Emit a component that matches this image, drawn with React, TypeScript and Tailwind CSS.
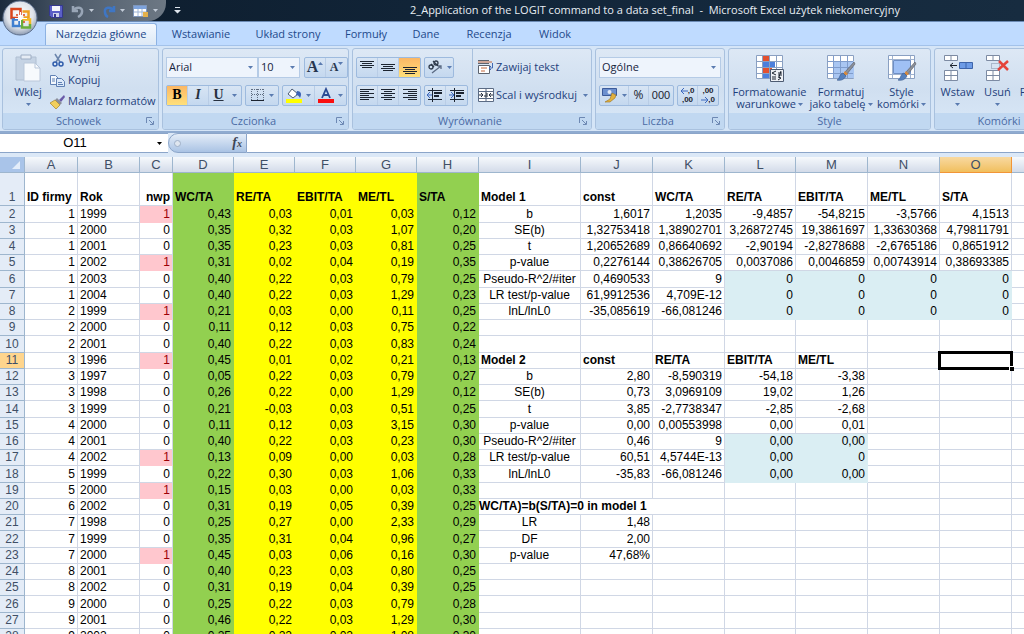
import React from 'react';
import clsx from 'clsx';

interface GroupProps {
  title: string;
  className: string;
  launcher?: boolean;
  children: React.ReactNode;
}

interface ButtonProps {
  label: string;
  className?: string;
  active?: boolean;
  children: React.ReactNode;
}

const tabs = [
  { name: 'Narzędzia główne', width: 'w-[112px]' },
  { name: 'Wstawianie', width: 'w-[88px]' },
  { name: 'Układ strony', width: 'w-[86px]' },
  { name: 'Formuły', width: 'w-[70px]' },
  { name: 'Dane', width: 'w-[50px]' },
  { name: 'Recenzja', width: 'w-[76px]' },
  { name: 'Widok', width: 'w-[56px]' },
];

const columns = [
  { name: 'A', width: 'w-[53px]' },
  { name: 'B', width: 'w-[62px]' },
  { name: 'C', width: 'w-[33px]' },
  { name: 'D', width: 'w-[61px]' },
  { name: 'E', width: 'w-[61px]' },
  { name: 'F', width: 'w-[61px]' },
  { name: 'G', width: 'w-[61px]' },
  { name: 'H', width: 'w-[62px]' },
  { name: 'I', width: 'w-[102px]' },
  { name: 'J', width: 'w-[72px]' },
  { name: 'K', width: 'w-[72px]' },
  { name: 'L', width: 'w-[71px]' },
  { name: 'M', width: 'w-[72px]' },
  { name: 'N', width: 'w-[72px]' },
  { name: 'O', width: 'w-[72px]' },
];

const headings = ['ID firmy', 'Rok', 'nwp', 'WC/TA', 'RE/TA', 'EBIT/TA', 'ME/TL', 'S/TA', 'Model 1', 'const', 'WC/TA', 'RE/TA', 'EBIT/TA', 'ME/TL', 'S/TA'];

// Sheet rows 2-28, columns A to O
const rows: string[][] = [
  ['1', '1999', '1', '0,43', '0,03', '0,01', '0,03', '0,12', 'b', '1,6017', '1,2035', '-9,4857', '-54,8215', '-3,5766', '4,1513'],
  ['1', '2000', '0', '0,35', '0,32', '0,03', '1,07', '0,20', 'SE(b)', '1,32753418', '1,38902701', '3,26872745', '19,3861697', '1,33630368', '4,79811791'],
  ['1', '2001', '0', '0,35', '0,23', '0,03', '0,81', '0,25', 't', '1,20652689', '0,86640692', '-2,90194', '-2,8278688', '-2,6765186', '0,8651912'],
  ['1', '2002', '1', '0,31', '0,02', '0,04', '0,19', '0,35', 'p-value', '0,2276144', '0,38626705', '0,0037086', '0,0046859', '0,00743914', '0,38693385'],
  ['1', '2003', '0', '0,40', '0,22', '0,03', '0,79', '0,25', 'Pseudo-R^2/#iter', '0,4690533', '9', '0', '0', '0', '0'],
  ['1', '2004', '0', '0,40', '0,22', '0,03', '1,29', '0,23', 'LR test/p-value', '61,9912536', '4,709E-12', '0', '0', '0', '0'],
  ['2', '1999', '1', '0,21', '0,03', '0,00', '0,11', '0,25', 'lnL/lnL0', '-35,085619', '-66,081246', '0', '0', '0', '0'],
  ['2', '2000', '0', '0,11', '0,12', '0,03', '0,75', '0,22'],
  ['2', '2001', '0', '0,40', '0,22', '0,03', '0,83', '0,24'],
  ['3', '1996', '1', '0,45', '0,01', '0,02', '0,21', '0,13', 'Model 2', 'const', 'RE/TA', 'EBIT/TA', 'ME/TL'],
  ['3', '1997', '0', '0,05', '0,22', '0,03', '0,79', '0,27', 'b', '2,80', '-8,590319', '-54,18', '-3,38'],
  ['3', '1998', '0', '0,26', '0,22', '0,00', '1,29', '0,12', 'SE(b)', '0,73', '3,0969109', '19,02', '1,26'],
  ['3', '1999', '0', '0,21', '-0,03', '0,03', '0,51', '0,25', 't', '3,85', '-2,7738347', '-2,85', '-2,68'],
  ['4', '2000', '0', '0,11', '0,12', '0,03', '3,15', '0,30', 'p-value', '0,00', '0,00553998', '0,00', '0,01'],
  ['4', '2001', '0', '0,40', '0,22', '0,03', '0,23', '0,30', 'Pseudo-R^2/#iter', '0,46', '9', '0,00', '0,00'],
  ['4', '2002', '1', '0,13', '0,09', '0,00', '0,03', '0,28', 'LR test/p-value', '60,51', '4,5744E-13', '0,00', '0'],
  ['5', '1999', '0', '0,22', '0,30', '0,03', '1,06', '0,33', 'lnL/lnL0', '-35,83', '-66,081246', '0,00', '0,00'],
  ['5', '2000', '1', '0,15', '0,03', '0,00', '0,03', '0,33'],
  ['6', '2002', '0', '0,31', '0,19', '0,05', '0,39', '0,25', 'WC/TA)=b(S/TA)=0 in model 1'],
  ['7', '1998', '0', '0,25', '0,27', '0,00', '2,33', '0,29', 'LR', '1,48'],
  ['7', '1999', '0', '0,35', '0,31', '0,04', '0,96', '0,27', 'DF', '2,00'],
  ['7', '2000', '1', '0,45', '0,03', '0,06', '0,16', '0,30', 'p-value', '47,68%'],
  ['8', '2001', '0', '0,40', '0,23', '0,03', '0,80', '0,25'],
  ['8', '2002', '0', '0,31', '0,19', '0,04', '0,39', '0,25'],
  ['9', '2000', '0', '0,25', '0,22', '0,03', '0,79', '0,28'],
  ['9', '2001', '0', '0,46', '0,22', '0,03', '1,29', '0,30'],
  ['9', '2002', '0', '0,25', '0,22', '0,02', '1,08', '0,30'],
];

const Arrow = ({ className = '' }: { className?: string }) => (
  <svg viewBox="0 0 5 3" className={clsx('h-[3px] w-[5px] shrink-0 fill-[#5a7bb0]', className)}>
    <path d="M0 0h5L2.5 3z" />
  </svg>
);

const Group = ({ title, className, launcher = true, children }: GroupProps) => (
  <section className={clsx('flex h-[82px] shrink-0 flex-col overflow-hidden rounded-[3px] border border-[#a9c1de] bg-linear-to-b from-[#dde8f5] via-[#d0dff0] to-[#d9e8f8]', className)}>
    <div className="flex h-16 px-[3px]">{children}</div>
    <h2 className="flex h-4 items-center bg-[#c1d8f1] text-[#4a6ba5]">
      <span className="flex-1 pl-2 text-center">{title}</span>
      {launcher ? (
        <button aria-label={title + ': więcej'} className="mr-1">
          <svg viewBox="0 0 8 8" className="size-2 fill-none stroke-[#6d88b3]">
            <path d="M.5 6V.5H6M3 3l4 4M7.500 4v3.500H4" />
          </svg>
        </button>
      ) : (
        <span className="w-2" />
      )}
    </h2>
  </section>
);

const Tools = ({ children }: { children: React.ReactNode }) => (
  <div className="flex h-[21px] divide-x divide-[#b9cde6] rounded-[2px] border border-[#9dbade] bg-linear-to-b from-[#d8e5f4] to-[#c4d8ef]">
    {children}
  </div>
);

const Tool = ({ label, className = 'w-[21px]', active, children }: ButtonProps) => (
  <button
    aria-label={label}
    className={clsx('flex items-center justify-center', className, active && 'bg-linear-to-b from-[#fbb765] to-[#ffe07a]')}
  >
    {children}
  </button>
);

const Lines = ({ d }: { d: string }) => (
  <svg viewBox="0 0 16 16" className="size-4 fill-none stroke-[#1c2430]">
    <path d={d} />
  </svg>
);

const Combo = ({ label, value, className }: { label: string; value: string; className: string }) => (
  <label className={clsx('relative flex h-[21px] items-center border border-[#b5cbe6] bg-[#eef4fc]', className)}>
    <select aria-label={label} className="w-full appearance-none bg-transparent pl-[2px] text-[#15233c] outline-none">
      <option>{value}</option>
    </select>
    <Arrow className="pointer-events-none absolute right-1" />
  </label>
);

const SmallButton = ({ text, arrow, children }: { text: string; arrow?: boolean; children: React.ReactNode }) => (
  <button className="flex h-[21px] items-center gap-[2px] whitespace-nowrap">
    {children}
    {text}
    {arrow && <Arrow className="ml-1" />}
  </button>
);

const BigButton = ({ lines, className, children }: { lines: string[]; className: string; children: React.ReactNode }) => (
  <button className={clsx('flex shrink-0 flex-col items-center pt-1 leading-3 whitespace-nowrap', className)}>
    {children}
    <span className="mt-[3px]">{lines[0]}</span>
    <span className="flex h-3 items-center gap-[2px]">
      {lines[1]}
      <Arrow />
    </span>
  </button>
);

const Brush = () => (
  <>
    <path d="M28 9l-9 10 2 2 8-10z" fill="#8d9199" stroke="#55585f" strokeWidth=".6" />
    <path d="M19 18l3 3-3 2-2-2z" fill="#d98a3c" />
    <path d="M17 20l3 3c-2 4-6 5-9 4 3-1 2-6 6-7z" fill="#5580bd" stroke="#35568c" strokeWidth=".6" />
  </>
);

const OfficeButton = () => (
  <button aria-label="Przycisk pakietu Office" className="absolute top-0 left-[2px] z-10">
    <svg viewBox="0 0 36 36" className="size-9">
      <defs>
        <radialGradient id="orb" cx=".5" cy=".4" r=".6">
          <stop offset="0" stopColor="#ffffff" />
          <stop offset=".65" stopColor="#dfe3ea" />
          <stop offset="1" stopColor="#8c9bb2" />
        </radialGradient>
      </defs>
      <circle cx="18" cy="18" r="17" fill="url(#orb)" stroke="#5d6f8c" />
      <g fill="none" strokeWidth="2.500">
        <path d="M16 18H9.500V9h9v6" stroke="#d9441c" />
        <path d="M20.500 11.500h6v6h-5" stroke="#f0a020" />
        <path d="M16 19.500h-5V26h6.500v-5" stroke="#3f7fd0" />
        <path d="M20 19.500h8v5" stroke="#f2b824" />
        <path d="M20 20v7.500h8V24" stroke="#6aae3a" />
      </g>
      <path d="M14 15h2M14 18h2M21 15h2M21 22h2" stroke="#d9441c" strokeWidth="1.500" />
      <path d="M18.500 12v13M13 18.500h12" stroke="#fff" />
    </svg>
  </button>
);

const TitleBar = () => (
  <header className="flex h-[21px] shrink-0 bg-linear-to-r from-[#0d1c2c] via-[#12263a] to-[#172c40]">
    <div className="flex w-[166px] items-center rounded-br-[18px] bg-linear-to-r from-[#1c2b3d] via-[#53606f] to-[#6d7884] pl-[49px]">
      <button aria-label="Zapisz">
        <svg viewBox="0 0 14 14" className="size-[14px]">
          <path d="M.5 1.500h13v12h-11l-2-2z" fill="#5a5fc7" stroke="#34388f" />
          <path d="M3 2h8v5H3z" fill="#f4f6fb" />
          <path d="M4 9h6v4H4z" fill="#cdd3ea" />
          <path d="M5 10h2v3H5z" fill="#34388f" />
        </svg>
      </button>
      <button aria-label="Cofnij" className="ml-2 flex items-center gap-1">
        <svg viewBox="0 0 14 14" className="size-[14px] fill-none stroke-[#98a5b6]" strokeWidth="2.500">
          <path d="M2 2v5h5M2 7c3-5 10-4 9 1 0 2-2 4-4 5" />
        </svg>
        <Arrow className="fill-[#c3ccd8]" />
      </button>
      <button aria-label="Wykonaj ponownie" className="ml-2 flex items-center gap-1">
        <svg viewBox="0 0 14 14" className="size-[14px] fill-none stroke-[#3f76c4]" strokeWidth="2.500">
          <path d="M12 2v5H7M12 7C9 2 2 3 3 8c0 2 1 4 3 5" />
        </svg>
        <Arrow className="fill-[#c3ccd8]" />
      </button>
      <button aria-label="Tabela" className="ml-2 flex items-center gap-1">
        <svg viewBox="0 0 16 14" className="h-[14px] w-4">
          <path d="M.5 1.500h13v11H.5z" fill="#fff" stroke="#7f97bd" />
          <path d="M1 2h12v3H1z" fill="#7ea3dc" />
          <path d="M1 8h12M5 5v7M9 5v7" stroke="#9db4d6" />
          <path d="M10 8h5v5h-5z" fill="#e3b04b" />
        </svg>
        <Arrow className="fill-[#c3ccd8]" />
      </button>
    </div>
    <button aria-label="Dostosuj pasek Szybki dostęp" className="ml-2">
      <svg viewBox="0 0 7 7" className="size-[7px] fill-[#dfe6ee]">
        <path d="M1 0h5v1H1zM0 3h7L3.500 6.500z" />
      </svg>
    </button>
    <h1 className="flex-1 truncate pl-[105px] text-center leading-5 text-[#e8eef4]">
      2_Application of the LOGIT command to a data set_final&nbsp; -&nbsp; Microsoft Excel użytek niekomercyjny
    </h1>
  </header>
);

const TabBar = () => (
  <nav className="flex h-6 shrink-0 items-end overflow-hidden border-t border-[#6c8bb5] bg-[#bfdbff] pl-[45px]">
    {tabs.map((tab, index) => (
      <button
        key={tab.name}
        className={clsx(
          'h-[22px] shrink-0 whitespace-nowrap text-[#1e4a8c]',
          tab.width,
          index === 0 && 'rounded-t-[3px] border border-b-0 border-[#8db2e3] bg-linear-to-b from-[#f4f9ff] to-[#dde9f6]'
        )}
      >
        {tab.name}
      </button>
    ))}
  </nav>
);

const Ribbon = () => (
  <div className="flex h-[88px] shrink-0 gap-[3px] overflow-hidden border-t border-b-2 border-t-[#a3c2ea] border-b-[#8fabd0] bg-[#d5e5f7] pt-[2px] pl-[2px] text-[#1e3f7c]">
    <Group title="Schowek" className="w-[157px]">
      <BigButton lines={['Wklej', '']} className="w-11">
        <svg viewBox="0 0 28 30" className="h-[30px] w-7">
          <path d="M2 4h20v23H2z" fill="#c5d3e4" stroke="#b0bfd2" />
          <path d="M7 2h10v4H7z" fill="#e6ecf4" stroke="#9eaec4" />
          <path d="M10 10h11l5 5v13H10z" fill="#f7fafd" stroke="#b9c7da" />
          <path d="M21 10v5h5" fill="none" stroke="#b9c7da" />
        </svg>
      </BigButton>
      <div className="flex flex-col">
        <SmallButton text="Wytnij">
          <svg viewBox="0 0 16 16" className="size-4 fill-none" strokeWidth="1.500">
            <path d="M5 2l5 8M11 2L6 10" stroke="#6c86ad" />
            <circle cx="5" cy="12" r="2" stroke="#2f5cab" />
            <circle cx="11" cy="12" r="2" stroke="#2f5cab" />
          </svg>
        </SmallButton>
        <SmallButton text="Kopiuj">
          <svg viewBox="0 0 16 16" className="size-4 stroke-[#5f80b4]">
            <path d="M.5 2.500h5l3 3v6h-8z" fill="#f4f8fd" />
            <path d="M6.500 5.500h5l3 3v5h-8z" fill="#dce9fa" />
            <path d="M2 6h3M2 8h3M8 9.500h4M8 11.500h5" />
          </svg>
        </SmallButton>
        <SmallButton text="Malarz formatów">
          <svg viewBox="0 0 16 16" className="size-4">
            <path d="M14 1l-5 5 2 2 4-5z" fill="#6a5aa8" />
            <path d="M7 4l5 5-2 2-5-5z" fill="#8a8e9a" />
            <path d="M5 6l5 5-4 4-6-6z" fill="#f2cf5c" stroke="#a5822b" strokeWidth=".7" />
          </svg>
        </SmallButton>
      </div>
    </Group>

    <Group title="Czcionka" className="w-[187px]">
      <div className="flex flex-col justify-center gap-[7px]">
        <div className="flex items-center">
          <Combo label="Czcionka" value="Arial" className="w-[92px]" />
          <Combo label="Rozmiar czcionki" value="10" className="mr-1 w-[42px]" />
          <Tools>
            <Tool label="Zwiększ rozmiar czcionki">
              <span className="font-['Liberation_Serif',serif] text-base leading-4 font-bold text-[#26364f]">A</span>
              <Arrow className="mb-2 rotate-180" />
            </Tool>
            <Tool label="Zmniejsz rozmiar czcionki">
              <span className="font-['Liberation_Serif',serif] text-xs font-bold text-[#26364f]">A</span>
              <Arrow className="mb-2" />
            </Tool>
          </Tools>
        </div>
        <div className="flex gap-[3px]">
          <Tools>
            <Tool label="Pogrubienie" active>
              <b className="font-['Liberation_Serif',serif] text-sm text-black">B</b>
            </Tool>
            <Tool label="Kursywa">
              <i className="font-['Liberation_Serif',serif] text-sm font-bold text-[#26303f]">I</i>
            </Tool>
            <Tool label="Podkreślenie" className="w-8 gap-2">
              <u className="font-['Liberation_Serif',serif] text-sm font-bold text-[#26303f]">U</u>
              <Arrow />
            </Tool>
          </Tools>
          <Tools>
            <Tool label="Obramowania" className="w-8 gap-1">
              <svg viewBox="0 0 14 14" className="size-[14px] fill-none stroke-[#5e6c80]">
                <path d="M.5 1v11M6.500 1v11M12.500 1v11M1 1.500h12M1 6.500h12" strokeDasharray="1 1" />
                <path d="M0 12.500h13" className="stroke-[#1c2430]" />
              </svg>
              <Arrow />
            </Tool>
          </Tools>
          <Tools>
            <Tool label="Kolor wypełnienia" className="w-8 gap-1">
              <svg viewBox="0 0 16 16" className="size-4">
                <path d="M6 2l6 5-5 4-5-4z" fill="#fff" stroke="#4d5b72" />
                <path d="M11 4c4 0 5 3 3 7-1-2-2-3-4-3z" fill="#3b62b4" />
                <path d="M0 12h16v4H0z" fill="#ffff00" />
              </svg>
              <Arrow />
            </Tool>
            <Tool label="Kolor czcionki" className="w-[31px] gap-1">
              <svg viewBox="0 0 16 16" className="size-4">
                <path d="M4 11l4-9 4 9M6 8h4" fill="none" stroke="#2b4a94" strokeWidth="1.800" />
                <path d="M0 12h16v4H0z" fill="#fa0f0f" />
              </svg>
              <Arrow />
            </Tool>
          </Tools>
        </div>
      </div>
    </Group>

    <Group title="Wyrównanie" className="w-[240px]">
      <div className="flex flex-col justify-center gap-[7px]">
        <div className="flex gap-[3px]">
          <Tools>
            <Tool label="Wyrównaj do góry">
              <Lines d="M1 2.500h14M3 4.500h10M1 6.500h14M3 8.500h10" />
            </Tool>
            <Tool label="Wyrównaj do środka">
              <Lines d="M1 5.500h14M3 7.500h10M1 9.500h14M3 11.500h10" />
            </Tool>
            <Tool label="Wyrównaj do dołu" active>
              <Lines d="M1 8.500h14M3 10.500h10M1 12.500h14M3 14.500h10" />
            </Tool>
          </Tools>
          <Tools>
            <Tool label="Orientacja" className="w-7 gap-1">
              <svg viewBox="0 0 16 16" className="size-4 fill-none stroke-[#2e3a4c]" strokeWidth="1.300">
                <circle cx="4" cy="8" r="2" />
                <path d="M4 5l3 3M6 2l5 5" />
                <circle cx="9" cy="4" r="2" />
                <path d="M5 14l9-7M14 10V7h-3" stroke="#5b6b84" />
              </svg>
              <Arrow />
            </Tool>
          </Tools>
        </div>
        <div className="flex gap-[3px]">
          <Tools>
            <Tool label="Wyrównaj do lewej">
              <Lines d="M1 2.500h14M1 4.500h9M1 6.500h14M1 8.500h9M1 10.500h14M1 12.500h9" />
            </Tool>
            <Tool label="Wyśrodkuj">
              <Lines d="M1 2.500h14M4 4.500h8M1 6.500h14M4 8.500h8M1 10.500h14M4 12.500h8" />
            </Tool>
            <Tool label="Wyrównaj do prawej">
              <Lines d="M1 2.500h14M6 4.500h9M1 6.500h14M6 8.500h9M1 10.500h14M6 12.500h9" />
            </Tool>
          </Tools>
          <Tools>
            <Tool label="Zmniejsz wcięcie">
              <svg viewBox="0 0 16 16" className="size-4 fill-none stroke-[#1c2430]">
                <path d="M1 3.500h14M1 12.500h14M5.500 1v14" />
                <path d="M7 6h8M7 9h5" strokeWidth="2" />
                <path d="M0 8h5M3 5L0 8l3 3" stroke="#3d68bd" />
              </svg>
            </Tool>
            <Tool label="Zwiększ wcięcie">
              <svg viewBox="0 0 16 16" className="size-4 fill-none stroke-[#1c2430]">
                <path d="M1 3.500h14M1 12.500h14M5.500 1v14" />
                <path d="M7 6h8M7 9h5" strokeWidth="2" />
                <path d="M0 8h5M2 5l3 3-3 3" stroke="#3d68bd" />
              </svg>
            </Tool>
          </Tools>
        </div>
      </div>
      <div className="ml-1 flex flex-col justify-center gap-[7px] border-l border-[#a9c1de] pl-[5px]">
        <SmallButton text="Zawijaj tekst">
          <svg viewBox="0 0 16 16" className="size-4 fill-none">
            <path d="M.5 6.500h11v8H.5z" stroke="#5c636e" fill="#fff" />
            <path d="M0 1.500h11M0 4.500h11" stroke="#5c636e" />
            <path d="M0 3h14M3 9h6M3 12h4" stroke="#c2663c" />
            <path d="M14.500 4v5h-3M13 7l-2 2 2 2" stroke="#4268b0" />
          </svg>
        </SmallButton>
        <SmallButton text="Scal i wyśrodkuj" arrow>
          <svg viewBox="0 0 16 16" className="size-4">
            <path d="M.5 1.500h15v13H.5z" fill="#fff" stroke="#5b6b84" />
            <path d="M1 4.500h14M1 11.500h14M8 1v3M8 12v2" stroke="#5b6b84" />
            <path d="M1 8h3M15 8h-3M3 6l2 2-2 2M13 6l-2 2 2 2" stroke="#26303f" fill="none" />
            <path d="M7 6h2v4H7V8h2" stroke="#26303f" fill="none" />
          </svg>
        </SmallButton>
      </div>
    </Group>

    <Group title="Liczba" className="w-[130px]">
      <div className="flex flex-col justify-center gap-[7px]">
        <Combo label="Format liczb" value="Ogólne" className="w-[122px]" />
        <div className="flex gap-[3px]">
          <Tools>
            <Tool label="Format księgowy" className="w-[29px] gap-1">
              <svg viewBox="0 0 16 16" className="size-4">
                <path d="M.5 1.500h14v7H.5z" fill="#6c90cf" stroke="#3c5b9a" />
                <circle cx="7.500" cy="5" r="2" fill="#dfe9f8" />
                <path d="M10 6l4 2-1 3-5 4H3l5-3z" fill="#e2b13f" stroke="#9b7320" strokeWidth=".6" />
              </svg>
              <Arrow />
            </Tool>
            <Tool label="Zapis procentowy" className="w-5 text-xs text-[#1c2430]">%</Tool>
            <Tool label="Zapis dziesiętny" className="w-[24px] font-['Liberation_Sans',Arial,sans-serif] text-[#1c2430]">000</Tool>
          </Tools>
          <Tools>
            <Tool label="Zwiększ dziesiętne" className="w-5 flex-col font-['Liberation_Sans',Arial,sans-serif] text-[8px] leading-[9px] font-bold text-[#1c2430]">
              <span className="flex h-[9px] items-center">
                <svg viewBox="0 0 7 6" className="h-[6px] w-[7px] fill-none stroke-[#3d68bd]">
                  <path d="M0 3h7M3 0L0 3l3 3" />
                </svg>
                ,0
              </span>
              <span>,00</span>
            </Tool>
            <Tool label="Zmniejsz dziesiętne" className="w-5 flex-col font-['Liberation_Sans',Arial,sans-serif] text-[8px] leading-[9px] font-bold text-[#1c2430]">
              <span>,00</span>
              <span className="flex h-[9px] items-center">
                <svg viewBox="0 0 7 6" className="h-[6px] w-[7px] fill-none stroke-[#3d68bd]">
                  <path d="M0 3h7M4 0l3 3-3 3" />
                </svg>
                ,0
              </span>
            </Tool>
          </Tools>
        </div>
      </div>
    </Group>

    <Group title="Style" className="w-[203px]" launcher={false}>
      <BigButton lines={['Formatowanie', 'warunkowe']} className="w-[75px]">
        <svg viewBox="0 0 30 30" className="size-[30px]">
          <path d="M1.500 2.500h26v23h-26z" fill="#fff" stroke="#8aa0c2" />
          <path d="M8 3h6v5H8zM8 14h9v6H8z" fill="#e3502f" />
          <path d="M8 8h12v6H8zM8 20h6v5H8z" fill="#4c7fdc" />
          <path d="M2 8.500h25M2 14.500h25M2 20.500h25M7.500 3v22M14.500 3v22M21.500 3v22" stroke="#8aa0c2" />
          <path d="M15.500 16.500h13v12h-13z" fill="#eef1f6" stroke="#4d5b72" />
          <path d="M21 18l-4 2 4 2M17 24h4M17 26h4M23 20h4M23 22h4M26 18l-2 6M23 24l3 1-3 2" fill="none" stroke="#1c2430" />
        </svg>
      </BigButton>
      <BigButton lines={['Formatuj', 'jako tabelę']} className="w-[68px]">
        <svg viewBox="0 0 30 30" className="size-[30px]">
          <path d="M1.500 2.500h26v23h-26z" fill="#fff" stroke="#8aa0c2" />
          <path d="M8 8h20v17H8z" fill="#a9c6f2" />
          <path d="M2 8.500h25M2 14.500h25M2 20.500h25M7.500 3v22M14.500 3v22M21.500 3v22" stroke="#7f9ccc" />
          <Brush />
        </svg>
      </BigButton>
      <BigButton lines={['Style', 'komórki']} className="w-[53px]">
        <svg viewBox="0 0 30 30" className="size-[30px]">
          <path d="M1.500 2.500h26v23h-26z" fill="#fff" stroke="#8aa0c2" />
          <path d="M2 6.500h25M2 21.500h25M5.500 3v22M23.500 3v22" stroke="#9fb2cf" />
          <path d="M6.500 7.500h17v13h-17z" fill="#9fc0f5" stroke="#6f8fc5" />
          <Brush />
        </svg>
      </BigButton>
    </Group>

    <Group title="Komórki" className="w-[130px]" launcher={false}>
      <BigButton lines={['Wstaw', '']} className="w-[39px]">
        <svg viewBox="0 0 30 30" className="size-[30px]">
          <path d="M1.500 2.500h13v5h-13zM1.500 17.500h13v10h-13zM1.500 22.500h13M8 3v4M8 18v9" fill="#fff" stroke="#7d8ba3" />
          <path d="M16.500 9.500h13v6h-13zM23 10v5" fill="#6d9be6" stroke="#3d64aa" />
          <path d="M14 12.500H7M10 10l-3 2.500 3 2.500" fill="none" stroke="#1c2430" />
        </svg>
      </BigButton>
      <BigButton lines={['Usuń', '']} className="w-[41px]">
        <svg viewBox="0 0 30 30" className="size-[30px]">
          <path d="M3.500 2.500h13v5h-13zM3.500 17.500h13v10h-13zM3.500 22.500h13M10 3v4M10 18v9" fill="#fff" stroke="#7d8ba3" />
          <path d="M8.500 10.500h8v5h-8z" fill="none" stroke="#7d8ba3" strokeDasharray="1 1" />
          <path d="M16 8l9 9M25 8l-10 9" stroke="#e4433b" strokeWidth="2.500" />
        </svg>
      </BigButton>
      <BigButton lines={['Formatuj', '']} className="w-[50px]">
        <svg viewBox="0 0 30 30" className="size-[30px]">
          <path d="M1.500 2.500h26v23h-26z" fill="#fff" stroke="#7d8ba3" />
          <path d="M7 8h15v12H7z" fill="#9fc0f5" />
        </svg>
      </BigButton>
    </Group>
  </div>
);

const FormulaBar = () => (
  <div className="flex h-6 shrink-0 border-b-4 border-[#dbe8f7] bg-[#dbe8f7]">
    <div className="flex w-[168px] items-center border-y border-[#8ba5c9] bg-white">
      <input
        aria-label="Pole nazwy"
        defaultValue="O11"
        className="w-[150px] text-center font-['Liberation_Sans',Arial,sans-serif] text-[13px] text-black outline-none"
      />
      <Arrow className="ml-[6px] h-1 w-[7px] fill-black" />
    </div>
    <div className="flex w-[79px] items-center justify-between rounded-l-full border border-[#8ba5c9] bg-linear-to-b from-[#e4edf8] to-[#aac3e4] pr-1 pl-[5px]">
      <span className="size-[7px] rounded-full border border-[#9fb0c8] bg-[#dfe6ef]" />
      <button aria-label="Wstaw funkcję" className="font-['Liberation_Serif',serif] text-sm leading-4 font-bold text-[#3d4656] italic">
        f<span className="text-[10px]">x</span>
      </button>
    </div>
    <input aria-label="Pasek formuły" className="min-w-0 flex-1 border-y border-[#8ba5c9] bg-white px-1 outline-none" />
  </div>
);

const fillFor = (row: number, col: number, value?: string) => {
  if (col === 3 || col === 7) return 'border-transparent bg-[#92d050]';
  if (col >= 4 && col <= 6) return 'border-transparent bg-[#ffff00]';
  if (col === 2 && value === '1') return 'border-r-[#d0d7e5] border-b-transparent bg-[#ffc7ce] text-[#9c0006]';
  if (row >= 6 && row <= 8 && col >= 11) return 'border-transparent bg-[#daeef3]';
  if (row >= 16 && row <= 18 && (col === 11 || col === 12)) return 'border-transparent bg-[#daeef3]';
  return 'border-[#d0d7e5]';
};

const alignFor = (row: number, col: number) => {
  if (row === 1 || (row === 11 && col >= 8)) return col === 2 ? 'text-right font-bold' : 'text-left font-bold';
  if (row === 20 && col === 8) return 'text-left font-bold';
  if (col === 1) return 'text-left';
  return col === 8 ? 'text-center' : 'text-right';
};

const Sheet = () => (
  <main className="flex-1 overflow-hidden bg-white">
    <table className="w-full min-w-[1016px] table-fixed border-separate border-spacing-0 font-['Liberation_Sans',Arial,sans-serif] text-xs leading-[15px] text-black">
      <colgroup>
        <col className="w-[25px]" />
        {columns.map((column) => (
          <col key={column.name} className={column.width} />
        ))}
        <col />
      </colgroup>
      <thead>
        <tr className="h-4 text-[#3f4f66]">
          <th aria-label="Zaznacz wszystko" className="border-r border-b border-[#9eb6ce] bg-[#a9c4e9] p-0">
            <svg viewBox="0 0 8 8" className="mr-1 ml-auto size-2 fill-[#e3edfa]">
              <path d="M8 0v8H0z" />
            </svg>
          </th>
          {columns.map((column) => (
            <th
              key={column.name}
              scope="col"
              className={clsx(
                'border-r border-b p-0 text-[13px] leading-[15px] font-normal',
                column.name === 'O'
                  ? 'border-[#f29536] bg-linear-to-b from-[#f8d9a0] to-[#f1bf5c]'
                  : 'border-[#9eb6ce] bg-linear-to-b from-[#f6f9fc] to-[#d3dbe9]'
              )}
            >
              {column.name}
            </th>
          ))}
          <th className="border-b border-[#9eb6ce] bg-linear-to-b from-[#f6f9fc] to-[#d3dbe9] p-0" />
        </tr>
      </thead>
      <tbody>
        {[headings, ...rows].map((cells, index) => {
          const row = index + 1;
          return (
            <tr key={row} className={row === 1 ? 'h-[33px]' : row % 4 === 2 ? 'h-[17px]' : 'h-4'}>
              <th
                scope="row"
                className={clsx(
                  'border-r border-b border-[#9eb6ce] p-0 align-bottom font-normal text-[#3f4f66]',
                  row === 11 ? 'bg-[#ffd58d]' : 'bg-[#e4ecf7]'
                )}
              >
                {row}
              </th>
              {columns.map((column, col) => {
                // I20 runs over into the empty cells on its right
                const wide = row === 20 && col === 8;
                if (row === 20 && (col === 9 || col === 10)) return null;
                return (
                  <td
                    key={column.name}
                    colSpan={wide ? 3 : 1}
                    className={clsx(
                      'border-r border-b align-bottom whitespace-nowrap',
                      wide ? 'p-0' : 'px-[2px] py-0',
                      row === 11 && col === 14 && 'relative',
                      alignFor(row, col),
                      fillFor(row, col, cells[col])
                    )}
                  >
                    {cells[col]}
                    {row === 11 && col === 14 && (
                      <span className="absolute -inset-[2px] border-[3px] border-black">
                        <span className="absolute -right-1 -bottom-1 size-[5px] border-t border-l border-white bg-black" />
                      </span>
                    )}
                  </td>
                );
              })}
              <td className="border-b border-[#d0d7e5] p-0" />
            </tr>
          );
        })}
      </tbody>
    </table>
  </main>
);

const App = () => {
  return (
    <div className="relative flex h-screen flex-col overflow-hidden bg-[#bfdbff] font-['Open_Sans','Noto_Sans',sans-serif] text-[11px]">
      <OfficeButton />
      <TitleBar />
      <TabBar />
      <Ribbon />
      <FormulaBar />
      <Sheet />
    </div>
  );
};

export default App;
